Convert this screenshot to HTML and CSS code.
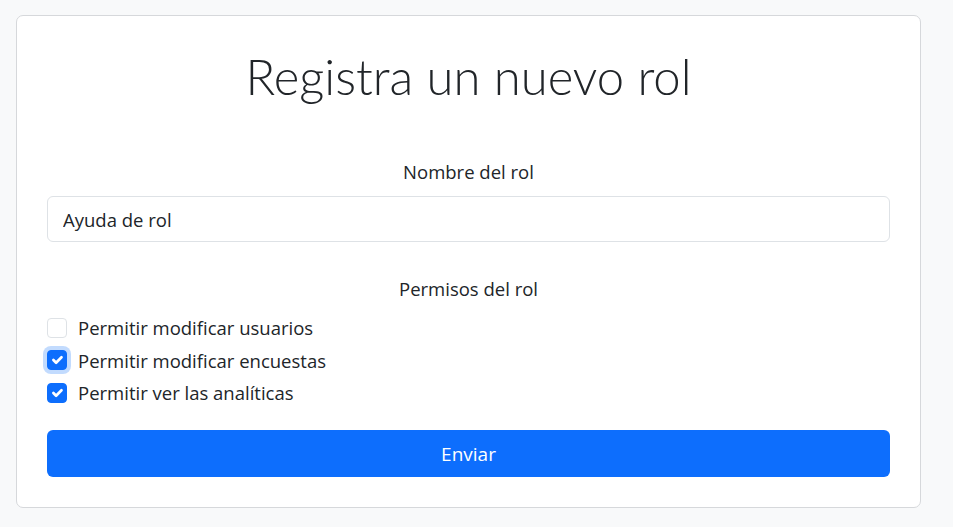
FILE: index.html
```html
<!DOCTYPE html>
<html lang="es">
<head>
<meta charset="utf-8">
<title>Registra un nuevo rol</title>
<link rel="stylesheet" href="styles.css">
</head>
<body>
<main class="page">
  <section class="card">
    <h1 class="title">Registra un nuevo rol</h1>
    <form class="form">
      <div class="field">
        <label class="field-label" for="nombre">Nombre del rol</label>
        <input class="input" id="nombre" type="text" value="Ayuda de rol">
      </div>
      <div class="field perms">
        <div class="field-label">Permisos del rol</div>
        <div class="checks">
          <label class="check">
            <span class="box"></span>
            <span>Permitir modificar usuarios</span>
          </label>
          <label class="check">
            <span class="box checked focused"><svg viewBox="0 0 20 20"><path d="M6 10l3 3l6-6" fill="none" stroke="#fff" stroke-width="3" stroke-linecap="round" stroke-linejoin="round"/></svg></span>
            <span>Permitir modificar encuestas</span>
          </label>
          <label class="check">
            <span class="box checked"><svg viewBox="0 0 20 20"><path d="M6 10l3 3l6-6" fill="none" stroke="#fff" stroke-width="3" stroke-linecap="round" stroke-linejoin="round"/></svg></span>
            <span>Permitir ver las analíticas</span>
          </label>
        </div>
      </div>
      <button class="btn" type="button">Enviar</button>
    </form>
  </section>
</main>
</body>
</html>
```
FILE: styles.css
```css
html, body {
  margin: 0;
  padding: 0;
  background: #f8f9fa;
  color: #212529;
  font-family: "Open Sans", "Noto Sans", sans-serif;
}
.page {
  padding: 15px 32px 19px 16px;
}
.card {
  background: #fff;
  border: 1px solid #d6d8db;
  border-radius: 7px;
  padding: 30px 30px 30px 30px;
}
.title {
  margin: 0 0 54px;
  text-align: center;
  font-family: "Lato", sans-serif;
  font-weight: 300;
  font-size: 49px;
  line-height: 60px;
}
.form {
  display: flex;
  flex-direction: column;
}
.field {
  display: flex;
  flex-direction: column;
}
.field-label {
  text-align: center;
  font-size: 18.5px;
  line-height: 24px;
  margin-bottom: 12px;
}
.input {
  height: 46px;
  box-sizing: border-box;
  border: 1px solid #dee2e6;
  border-radius: 6px;
  padding: 0 15px;
  font: inherit;
  font-size: 18.5px;
  color: #212529;
  outline: none;
}
.perms {
  margin-top: 35px;
}
.perms .field-label {
  margin-bottom: 16px;
}
.checks {
  display: flex;
  flex-direction: column;
  gap: 11.5px;
}
.check {
  display: flex;
  align-items: center;
  gap: 11px;
  font-size: 18.5px;
  line-height: 21px;
}
.box {
  width: 20px;
  height: 20px;
  box-sizing: border-box;
  border: 1px solid #dee2e6;
  border-radius: 4px;
  background: #fff;
  display: flex;
}
.box svg {
  width: 100%;
  height: 100%;
}
.box.checked {
  background: #0d6efd;
  border-color: #0d6efd;
}
.box.focused {
  box-shadow: 0 0 0 4px rgba(13, 110, 253, 0.25);
}
.btn {
  margin-top: 27px;
  height: 47px;
  border: none;
  border-radius: 6px;
  background: #0d6efd;
  color: #fff;
  font: inherit;
  font-size: 19px;
}
```
